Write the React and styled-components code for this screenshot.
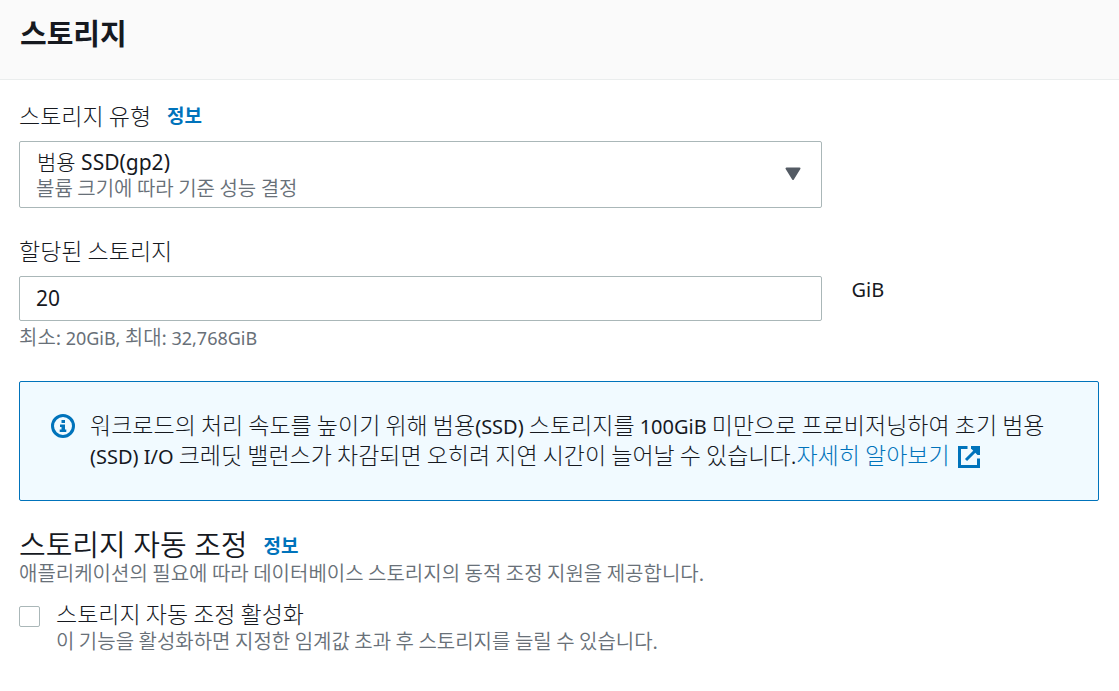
import React from "react";
import styled, { createGlobalStyle } from "styled-components";

const GlobalStyle = createGlobalStyle`
  *, *::before, *::after { box-sizing: border-box; }
  body {
    margin: 0;
    background: #fff;
    color: #16191f;
    font-family: "Noto Sans CJK KR", "Noto Sans", sans-serif;
    font-size: 23px;
    font-weight: 300;
    line-height: 30px;
  }
`;

const Header = styled.header`
  padding: 12px 20px 27px;
  background: #fafafa;
  border-bottom: 1px solid #eaeded;
`;

const Title = styled.h1`
  margin: 0;
  font-size: 29px;
  font-weight: 700;
  line-height: 40px;
`;

const Body = styled.main`
  padding: 20px 20px 32px 19px;
`;

const Row = styled.div`
  display: grid;
  grid-template-columns: repeat(4, 1fr);
  column-gap: 30px;
`;

const Field = styled.div`
  grid-column: span 3;
`;

const LabelLine = styled.div`
  display: flex;
  align-items: center;
  gap: 16px;
  height: 29px;
  margin-bottom: 12px;
`;

const Latin = styled.span`
  font-family: "Noto Sans", sans-serif;
  font-size: ${(p) => (p.$small ? 18 : 20)}px;
  font-weight: 400;
  line-height: 1;
`;

const InfoLink = styled.a`
  color: #0073bb;
  font-size: 19px;
  font-weight: 700;
  text-decoration: none;
`;

const Note = styled.p`
  margin: 0;
  color: #687078;
  font-size: 20px;
  font-weight: 350;
  line-height: 22px;
`;

const SelectBox = styled.div`
  position: relative;
  margin-bottom: 27px;
`;

const Select = styled.select`
  display: block;
  width: 100%;
  height: 67px;
  padding: 5px 48px 30px 17px;
  appearance: none;
  border: 1px solid #aab7b8;
  border-radius: 2px;
  background: #fff;
  color: #16191f;
  font: 400 21px/30px "Noto Sans", "Noto Sans CJK KR Light", "Noto Sans CJK KR", sans-serif;
`;

const SelectNote = styled(Note)`
  position: absolute;
  left: 17px;
  bottom: 9px;
  pointer-events: none;
`;

const Caret = styled.svg`
  position: absolute;
  right: 21px;
  top: 26px;
  pointer-events: none;
`;

const Input = styled.input`
  display: block;
  width: 100%;
  height: 45px;
  margin-bottom: 5px;
  padding: 0 16px 2px;
  border: 1px solid #aab7b8;
  border-radius: 2px;
  background: #fff;
  color: #16191f;
  font: 400 21px/30px "Noto Sans", sans-serif;
`;

const Unit = styled.div`
  padding-top: 37px;
`;

const Alert = styled.section`
  display: flex;
  align-items: flex-start;
  gap: 15px;
  margin: 33px 0 27px;
  padding: 27px 48px 31px 31px;
  border: 1px solid #0073bb;
  border-radius: 2px;
  background: #f1faff;
`;

const InfoIcon = styled.svg`
  flex: none;
  margin-top: 5px;
`;

const AlertText = styled.p`
  margin: 0;
`;

const AlertLink = styled.a`
  color: #0073bb;
  text-decoration: none;
  white-space: nowrap;
`;

const ExternalIcon = styled.svg`
  margin-left: 8px;
  vertical-align: -4px;
`;

const SectionLine = styled.div`
  display: flex;
  align-items: center;
  gap: 16px;
  height: 34px;
`;

const SectionTitle = styled.h2`
  margin: 0;
  font-family: "Noto Sans", "Noto Sans CJK KR", sans-serif;
  font-size: 29px;
  font-weight: 350;
  line-height: 34px;
`;

const CheckRow = styled.div`
  display: flex;
  align-items: flex-start;
  gap: 16px;
  margin-top: 14px;
`;

const Checkbox = styled.input`
  flex: none;
  width: 21px;
  height: 21px;
  margin: 8px 0 0;
  appearance: none;
  border: 1px solid #aab7b8;
  border-radius: 2px;
  background: #fff;

  &:checked {
    background: #0073bb;
  }
`;

const CheckLabel = styled.label`
  display: block;
  margin-bottom: 2px;
`;

export default function App() {
  return (
    <>
      <GlobalStyle />
      <Header>
        <Title>스토리지</Title>
      </Header>
      <Body>
        <Row>
          <Field>
            <LabelLine>
              <label htmlFor="storage-type">스토리지 유형</label>
              <InfoLink href="#storage-type-info">정보</InfoLink>
            </LabelLine>
            <SelectBox>
              <Select id="storage-type" aria-describedby="storage-type-note">
                <option>범용 SSD(gp2)</option>
              </Select>
              <SelectNote id="storage-type-note">볼륨 크기에 따라 기준 성능 결정</SelectNote>
              <Caret width="16" height="14" viewBox="0 0 16 14" aria-hidden="true">
                <path d="M1.5 1.5h13L8 12z" fill="#545b64" stroke="#545b64" strokeWidth="2" strokeLinejoin="round" />
              </Caret>
            </SelectBox>
          </Field>
        </Row>
        <Row>
          <Field>
            <LabelLine>
              <label htmlFor="allocated">할당된 스토리지</label>
            </LabelLine>
            <Input id="allocated" type="text" inputMode="numeric" defaultValue="20" aria-describedby="allocated-note" />
            <Note id="allocated-note">
              최소: <Latin $small>20GiB,</Latin> 최대: <Latin $small>32,768GiB</Latin>
            </Note>
          </Field>
          <Unit>
            <Latin>GiB</Latin>
          </Unit>
        </Row>

        <Alert>
          <InfoIcon width="24" height="24" viewBox="0 0 24 24" aria-hidden="true">
            <circle cx="12" cy="12" r="10.5" fill="none" stroke="#0073bb" strokeWidth="3" />
            <path d="M10.5 6H14v3h-3.5zM9 10.5h5v5h1.300V18H8.700v-2.500h1.800v-2.500H9z" fill="#0073bb" />
          </InfoIcon>
          <AlertText>
            워크로드의 처리 속도를 높이기 위해 범용<Latin>(SSD)</Latin> 스토리지를 <Latin>100GiB</Latin> 미만으로
            프로비저닝하여 초기 범용<Latin>(SSD) I/O</Latin> 크레딧 밸런스가 차감되면 오히려 지연 시간이 늘어날 수
            있습니다.
            <AlertLink href="#learn-more">
              자세히 알아보기
              <ExternalIcon width="22" height="22" viewBox="0 0 22 22" aria-hidden="true">
                <path d="M9.500 1.500H1.500v19h19V12.500" fill="none" stroke="#0073bb" strokeWidth="3" />
                <path d="M8 14L19 3" fill="none" stroke="#0073bb" strokeWidth="3" />
                <path d="M13 0h9v9h-2.500L13 2.500z" fill="#0073bb" />
              </ExternalIcon>
            </AlertLink>
          </AlertText>
        </Alert>

        <SectionLine>
          <SectionTitle>스토리지 자동 조정</SectionTitle>
          <InfoLink href="#autoscaling-info">정보</InfoLink>
        </SectionLine>
        <Note>애플리케이션의 필요에 따라 데이터베이스 스토리지의 동적 조정 지원을 제공합니다.</Note>
        <CheckRow>
          <Checkbox id="autoscaling" type="checkbox" aria-describedby="autoscaling-note" />
          <div>
            <CheckLabel htmlFor="autoscaling">스토리지 자동 조정 활성화</CheckLabel>
            <Note id="autoscaling-note">이 기능을 활성화하면 지정한 임계값 초과 후 스토리지를 늘릴 수 있습니다.</Note>
          </div>
        </CheckRow>
      </Body>
    </>
  );
}
